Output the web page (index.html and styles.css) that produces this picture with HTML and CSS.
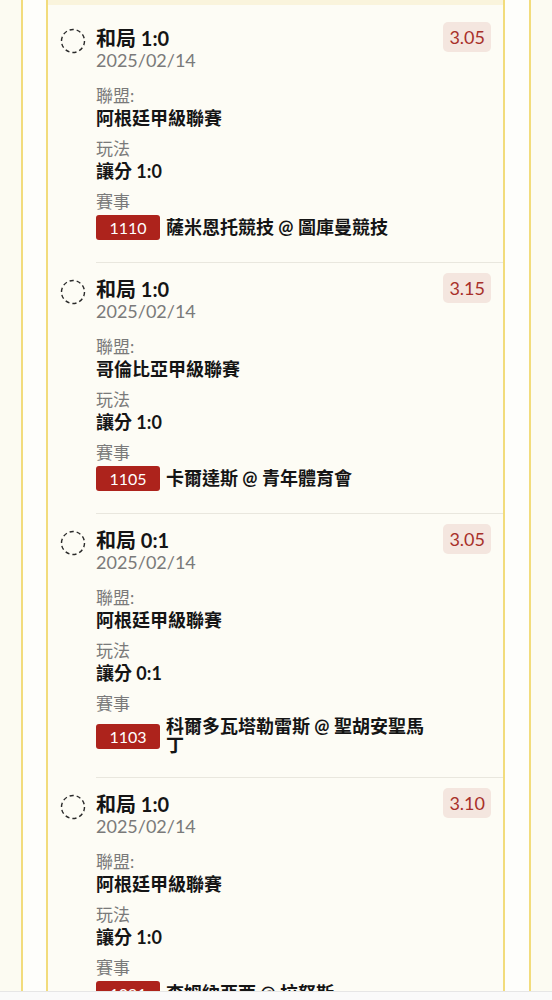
FILE: index.html
```html
<!DOCTYPE html>
<html lang="zh-Hant">
<head>
<meta charset="utf-8">
<title>投注記錄</title>
<link rel="stylesheet" href="styles.css">
</head>
<body>
<div class="Page">
  <div class="Card">
    <div class="CardTop"></div>

    <div class="Bet">
      <svg class="Pick" viewBox="0 0 26 26"><circle cx="13" cy="13" r="11.5"/></svg>
      <div class="BetBody">
        <div class="BetInfo">
          <div class="BetTitle">和局 1:0</div>
          <div class="BetDate">2025/02/14</div>
          <div class="Field">
            <div class="Label">聯盟:</div>
            <div class="Value">阿根廷甲級聯賽</div>
          </div>
          <div class="Field">
            <div class="Label">玩法</div>
            <div class="Value">讓分 1:0</div>
          </div>
          <div class="Field">
            <div class="Label">賽事</div>
            <div class="Match"><span class="MatchNo">1110</span><span class="MatchName">薩米恩托競技 @ 圖庫曼競技</span></div>
          </div>
        </div>
        <div class="Odds">3.05</div>
      </div>
    </div>

    <div class="Bet">
      <svg class="Pick" viewBox="0 0 26 26"><circle cx="13" cy="13" r="11.5"/></svg>
      <div class="BetBody">
        <div class="BetInfo">
          <div class="BetTitle">和局 1:0</div>
          <div class="BetDate">2025/02/14</div>
          <div class="Field">
            <div class="Label">聯盟:</div>
            <div class="Value">哥倫比亞甲級聯賽</div>
          </div>
          <div class="Field">
            <div class="Label">玩法</div>
            <div class="Value">讓分 1:0</div>
          </div>
          <div class="Field">
            <div class="Label">賽事</div>
            <div class="Match"><span class="MatchNo">1105</span><span class="MatchName">卡爾達斯 @ 青年體育會</span></div>
          </div>
        </div>
        <div class="Odds">3.15</div>
      </div>
    </div>

    <div class="Bet">
      <svg class="Pick" viewBox="0 0 26 26"><circle cx="13" cy="13" r="11.5"/></svg>
      <div class="BetBody">
        <div class="BetInfo">
          <div class="BetTitle">和局 0:1</div>
          <div class="BetDate">2025/02/14</div>
          <div class="Field">
            <div class="Label">聯盟:</div>
            <div class="Value">阿根廷甲級聯賽</div>
          </div>
          <div class="Field">
            <div class="Label">玩法</div>
            <div class="Value">讓分 0:1</div>
          </div>
          <div class="Field">
            <div class="Label">賽事</div>
            <div class="Match"><span class="MatchNo">1103</span><span class="MatchName">科爾多瓦塔勒雷斯 @ 聖胡安聖馬丁</span></div>
          </div>
        </div>
        <div class="Odds">3.05</div>
      </div>
    </div>

    <div class="Bet">
      <svg class="Pick" viewBox="0 0 26 26"><circle cx="13" cy="13" r="11.5"/></svg>
      <div class="BetBody">
        <div class="BetInfo">
          <div class="BetTitle">和局 1:0</div>
          <div class="BetDate">2025/02/14</div>
          <div class="Field">
            <div class="Label">聯盟:</div>
            <div class="Value">阿根廷甲級聯賽</div>
          </div>
          <div class="Field">
            <div class="Label">玩法</div>
            <div class="Value">讓分 1:0</div>
          </div>
          <div class="Field">
            <div class="Label">賽事</div>
            <div class="Match"><span class="MatchNo">1091</span><span class="MatchName">查姆納亞西 @ 拉努斯</span></div>
          </div>
        </div>
        <div class="Odds">3.10</div>
      </div>
    </div>
  </div>
</div>
<div class="BottomBar"></div>
</body>
</html>
```

FILE: styles.css
```css
body { margin: 0; background: #fcfbf2; font-family: Lato, "Noto Sans CJK TC", sans-serif; color: #151515; }
.Page { margin: 0 21px; padding: 0 24px 0 23px; border-left: 2px solid #f2dc7c; border-right: 2px solid #f2dc7c; background: #fefefb; }
.Card { border-left: 2px solid #f2dc7c; border-right: 2px solid #f2dc7c; background: #fdfcf5; padding-bottom: 40px; }
.CardTop { height: 5px; background: #faf4dc; margin-bottom: 7px; }

.Bet { display: flex; padding-left: 12px; }
.Pick { flex: none; width: 26px; height: 26px; margin: 16px 10px 0 0; fill: none; stroke: #2a2a2a; stroke-width: 1.4; stroke-dasharray: 4.2 3; }
.BetBody { flex: 1; display: flex; padding: 15px 12px 22px 0; border-bottom: 1px solid #e9e7de; }
.BetInfo { flex: 1; padding-right: 12px; }
.BetTitle { font-size: 20px; line-height: 23px; font-weight: bold; }
.BetDate { font-size: 18px; line-height: 20px; color: #7a7a7a; margin-bottom: 16px; }

.Field + .Field { margin-top: 9px; }
.Label { font-size: 17px; line-height: 20px; color: #7a7a7a; }
.Value { font-size: 18px; line-height: 24px; font-weight: bold; }

.Match { display: flex; align-items: center; margin-top: 3px; min-height: 25px; }
.MatchNo { flex: none; width: 64px; height: 25px; line-height: 25px; margin-right: 6px; border-radius: 3px; background: #ad231c; color: #fff; font-size: 16px; text-align: center; }
.MatchName { font-size: 18px; line-height: 19px; font-weight: bold; }

.Odds { flex: none; align-self: flex-start; margin-top: -5px; padding: 0 6px; height: 30px; line-height: 30px; border-radius: 5px; background: #f4e6df; color: #a8302a; font-size: 18px; }

.BottomBar { position: fixed; left: 0; right: 0; bottom: 0; height: 8px; background: #fafafa; border-top: 1px solid #e6e6e6; }
```
